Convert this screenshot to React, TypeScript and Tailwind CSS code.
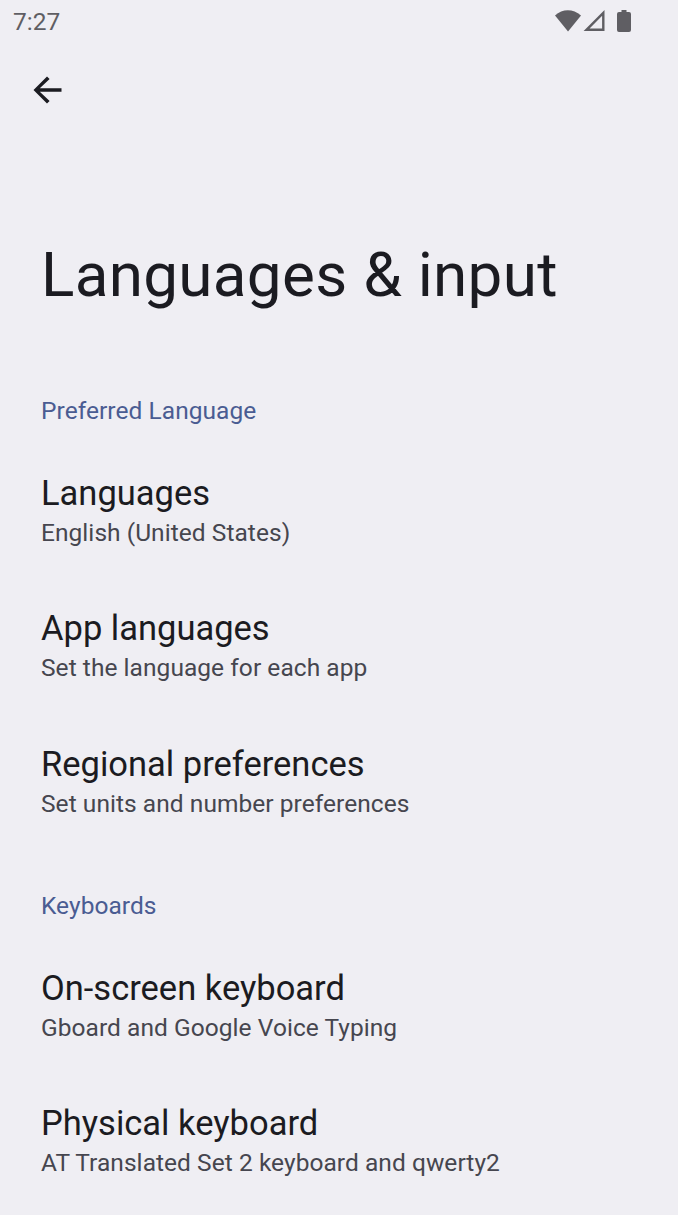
const groups = [
  {
    title: "Preferred Language",
    items: [
      ["Languages", "English (United States)"],
      ["App languages", "Set the language for each app"],
      ["Regional preferences", "Set units and number preferences"],
    ],
  },
  {
    title: "Keyboards",
    items: [
      ["On-screen keyboard", "Gboard and Google Voice Typing"],
      ["Physical keyboard", "AT Translated Set 2 keyboard and qwerty2"],
    ],
  },
];

function StatusBar() {
  return (
    <header className="flex h-11 items-center justify-between pl-[13px] pr-[46px] text-[#5f5e63]">
      <span className="text-[24.5px] leading-7">7:27</span>
      <svg width="78" height="26" viewBox="0 0 78 26" fill="none">
        <path d="M1 6.5C8.5 -.5 19 -.5 27 6.5L14 22.5Z" fill="currentColor" />
        <path d="M49.300 4V20.800H32.500Z" stroke="currentColor" strokeWidth="2.4" />
        <path d="M67.5 1h5v2H75q2 0 2 2v16q0 2-2 2H65q-2 0-2-2V5q0-2 2-2h2.500Z" fill="currentColor" />
      </svg>
    </header>
  );
}

export default function App() {
  return (
    <main className="flex h-[1215px] w-[678px] flex-col overflow-hidden bg-[#efeef3] font-['Roboto',sans-serif] text-[#1b1b21]">
      <StatusBar />
      <button className="ml-[27px] mt-[26px] h-10 w-10 shrink-0" aria-label="Back">
        <svg width="40" height="40" viewBox="0 0 40 40" fill="currentColor">
          <path d="M34.500 18.300H12.8l9.800-9.300L20 6.400 6.500 20 20 33.600l2.600-2.600-9.800-9.300H34.500Z" />
        </svg>
      </button>
      <h1 className="ml-[41px] mt-[125px] text-[62px] leading-[80px] tracking-[0.3px]">Languages &amp; input</h1>
      {groups.map((group) => (
        <section key={group.title} className="pl-[41px] pt-[80px] nth-of-type-[2]:pt-[70px]">
          <h2 className="text-[24.5px] leading-8 tracking-[0.05px] text-[#4a5c92]">{group.title}</h2>
          <ul className="mt-[45px] flex flex-col gap-[58.4px]">
            {group.items.map(([title, detail]) => (
              <li key={title} className="flex flex-col gap-[3px]">
                <h3 className="text-[34.5px] leading-[42px]">{title}</h3>
                <p className="text-[24.5px] leading-8 tracking-[0.05px] text-[#46464f]">{detail}</p>
              </li>
            ))}
          </ul>
        </section>
      ))}
    </main>
  );
}
